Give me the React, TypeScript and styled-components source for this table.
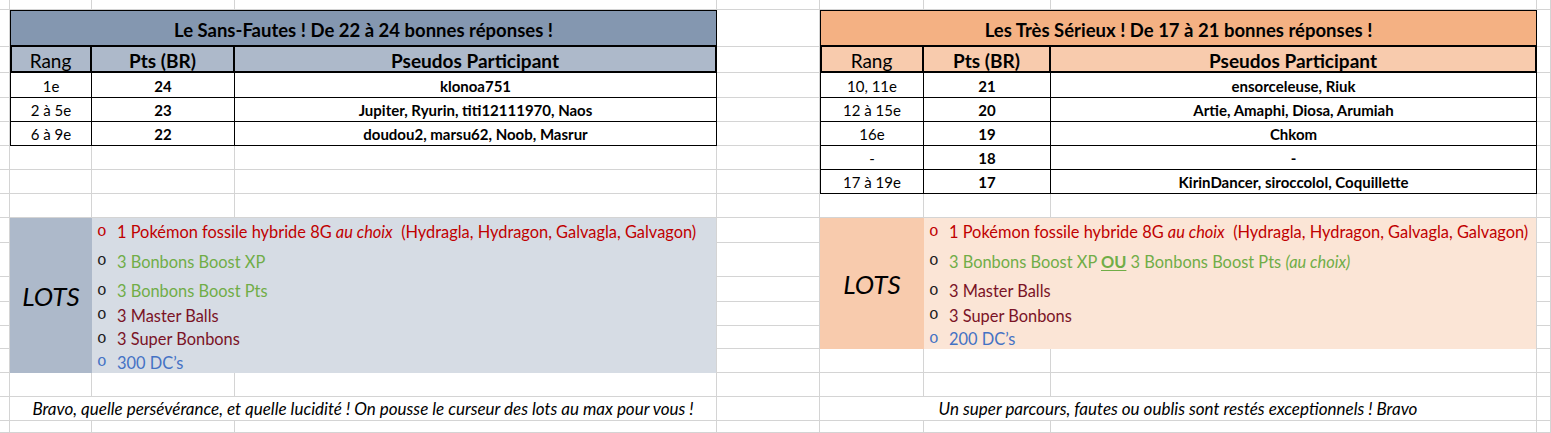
import React from 'react';
import styled, { createGlobalStyle } from 'styled-components';

const GlobalStyle = createGlobalStyle`
    *, *::before, *::after {
        box-sizing: border-box;
    }
    html, body {
        margin: 0;
        padding: 0;
        overflow: hidden;
        background: #ffffff;
    }
    body {
        font-family: Lato, 'Liberation Sans', sans-serif;
        color: #000000;
    }
`;

const GRID_LINE = '#d4d4d4';

// spreadsheet tracks, in px (column widths / row heights as seen on screen)
const COLS = [10, 82, 143, 482, 103, 104, 127, 486, 14];
const ROWS = [10, 37, 26, 25, 24, 24, 24, 24, 24, 25, 34, 25, 24, 23, 24, 24, 24, 12];

// 9 x 18 cells minus the 75 covered by the two tables, lots and notes
const BLANK_CELLS = COLS.length * ROWS.length - 75;

const Sheet = styled.div`
    display: grid;
    grid-template-columns: ${COLS.map((c) => `${c}px`).join(' ')};
    grid-template-rows: ${ROWS.map((r) => `${r}px`).join(' ')};
    grid-auto-flow: row;
    width: 1551px;
    height: 433px;
    overflow: hidden;
`;

const Blank = styled.div`
    border-right: 1px solid ${GRID_LINE};
    border-bottom: 1px solid ${GRID_LINE};
`;

const Table = styled.div<{ $area: string; $cols: number[]; $rows: number[] }>`
    grid-area: ${(p) => p.$area};
    display: grid;
    grid-template-columns: ${(p) => p.$cols.map((c) => `${c}px`).join(' ')};
    grid-template-rows: ${(p) => p.$rows.map((r) => `${r}px`).join(' ')};
    border-left: 1px solid #000;
    border-top: 1px solid #000;
    background: #ffffff;
`;

const TitleCell = styled.div<{ $bg: string }>`
    grid-column: 1 / -1;
    display: flex;
    align-items: center;
    justify-content: center;
    padding-top: 3px;
    background: ${(p) => p.$bg};
    border-right: 1px solid #000;
    border-bottom: 2px solid #000;
    font-size: 18.5px;
    font-weight: 700;
`;

const HeadCell = styled.div<{ $bg: string; $first?: boolean; $bold?: boolean }>`
    display: flex;
    align-items: center;
    justify-content: center;
    padding-top: 3px;
    background: ${(p) => p.$bg};
    border-right: 2px solid #000;
    border-bottom: 2px solid #000;
    box-shadow: ${(p) => (p.$first ? 'inset 1px 0 0 #000' : 'none')};
    font-size: 19px;
    font-weight: ${(p) => (p.$bold ? 700 : 400)};
`;

const DataCell = styled.div<{ $bold?: boolean }>`
    display: flex;
    align-items: center;
    justify-content: center;
    padding-top: 1px;
    border-right: 1px solid #000;
    border-bottom: 1px solid #000;
    font-size: 15px;
    font-weight: ${(p) => (p.$bold ? 700 : 400)};
    white-space: nowrap;
`;

const Lots = styled.div<{ $area: string; $label: number }>`
    grid-area: ${(p) => p.$area};
    display: grid;
    grid-template-columns: ${(p) => p.$label}px 1fr;
    border-right: 1px solid ${GRID_LINE};
    overflow: hidden;
`;

const LotsLabel = styled.div<{ $bg: string }>`
    display: flex;
    align-items: center;
    justify-content: center;
    background: ${(p) => p.$bg};
    font-size: 26px;
    font-style: italic;
`;

const LotsList = styled.ul<{ $bg: string }>`
    list-style: none;
    margin: 0;
    padding: 0 0 0 5px;
    background: ${(p) => p.$bg};
    display: flex;
    flex-direction: column;
`;

const LotsItem = styled.li<{ $h: number; $color: string }>`
    height: ${(p) => p.$h}px;
    flex: none;
    display: flex;
    align-items: center;
    padding-top: 2px;
    color: ${(p) => p.$color};
    font-size: 16.4px;
    white-space: pre;
`;

const Bullet = styled.span<{ $color: string }>`
    width: 20px;
    flex: none;
    font-family: 'Liberation Mono', monospace;
    font-size: 16px;
    color: ${(p) => p.$color};
`;

const Em = styled.em`
    font-style: italic;
`;

const Or = styled.strong`
    font-weight: 700;
    text-decoration: underline;
    text-underline-offset: 2px;
`;

const Note = styled.div<{ $area: string }>`
    grid-area: ${(p) => p.$area};
    display: flex;
    align-items: center;
    justify-content: center;
    border-right: 1px solid ${GRID_LINE};
    border-bottom: 1px solid ${GRID_LINE};
    font-size: 17px;
    font-style: italic;
    white-space: nowrap;
`;

const RED = '#c00000';
const GREEN = '#70ad47';
const MAROON = '#7a1326';
const BLUE = '#4472c4';
const INK = '#1a1a1a';

type Row = [string, string, string];

const leftRows: Row[] = [
    ['1e', '24', 'klonoa751'],
    ['2 à 5e', '23', 'Jupiter, Ryurin, titi12111970, Naos'],
    ['6 à 9e', '22', 'doudou2, marsu62, Noob, Masrur'],
];

const rightRows: Row[] = [
    ['10, 11e', '21', 'ensorceleuse, Riuk'],
    ['12 à 15e', '20', 'Artie, Amaphi, Diosa, Arumiah'],
    ['16e', '19', 'Chkom'],
    ['-', '18', '-'],
    ['17 à 19e', '17', 'KirinDancer, siroccolol, Coquillette'],
];

function Results(props: {
    area: string;
    cols: number[];
    title: string;
    titleBg: string;
    headBg: string;
    rows: Row[];
}): React.ReactElement {
    const { area, cols, title, titleBg, headBg, rows } = props;
    const heights = [36, 26, 25, ...rows.slice(1).map(() => 24)];
    return (
        <Table $area={area} $cols={cols} $rows={heights}>
            <TitleCell $bg={titleBg}>{title}</TitleCell>
            <HeadCell $bg={headBg} $first>
                Rang
            </HeadCell>
            <HeadCell $bg={headBg} $bold>
                Pts (BR)
            </HeadCell>
            <HeadCell $bg={headBg} $bold>
                Pseudos Participant
            </HeadCell>
            {rows.map(([rank, pts, names]) => (
                <React.Fragment key={rank + pts}>
                    <DataCell>{rank}</DataCell>
                    <DataCell $bold>{pts}</DataCell>
                    <DataCell $bold>{names}</DataCell>
                </React.Fragment>
            ))}
        </Table>
    );
}

function Fossil(): React.ReactElement {
    return (
        <LotsItem $h={25} $color={RED}>
            <Bullet $color={RED}>o</Bullet>
            1 Pokémon fossile hybride 8G <Em>au choix</Em>
            {'  (Hydragla, Hydragon, Galvagla, Galvagon)'}
        </LotsItem>
    );
}

function App(): React.ReactElement {
    return (
        <>
            <GlobalStyle />
            <Sheet>
                <Results
                    area="2 / 2 / 7 / 5"
                    cols={[81, 143, 482]}
                    title="Le Sans-Fautes ! De 22 à 24 bonnes réponses !"
                    titleBg="#8497b0"
                    headBg="#adb9ca"
                    rows={leftRows}
                />
                <Results
                    area="2 / 6 / 9 / 9"
                    cols={[103, 127, 486]}
                    title="Les Très Sérieux ! De 17 à 21 bonnes réponses !"
                    titleBg="#f4b183"
                    headBg="#f8cbad"
                    rows={rightRows}
                />

                <Lots $area="10 / 2 / 16 / 5" $label={82}>
                    <LotsLabel $bg="#adb9ca">LOTS</LotsLabel>
                    <LotsList $bg="#d6dce4">
                        <Fossil />
                        <LotsItem $h={34} $color={GREEN}>
                            <Bullet $color={INK}>o</Bullet>3 Bonbons Boost XP
                        </LotsItem>
                        <LotsItem $h={25} $color={GREEN}>
                            <Bullet $color={INK}>o</Bullet>3 Bonbons Boost Pts
                        </LotsItem>
                        <LotsItem $h={24} $color={MAROON}>
                            <Bullet $color={INK}>o</Bullet>3 Master Balls
                        </LotsItem>
                        <LotsItem $h={23} $color={MAROON}>
                            <Bullet $color={INK}>o</Bullet>3 Super Bonbons
                        </LotsItem>
                        <LotsItem $h={24} $color={BLUE}>
                            <Bullet $color={BLUE}>o</Bullet>300 DC’s
                        </LotsItem>
                    </LotsList>
                </Lots>

                <Lots $area="10 / 6 / 15 / 9" $label={104}>
                    <LotsLabel $bg="#f8cbad">LOTS</LotsLabel>
                    <LotsList $bg="#fbe5d6">
                        <Fossil />
                        <LotsItem $h={34} $color={GREEN}>
                            <Bullet $color={INK}>o</Bullet>3 Bonbons Boost XP <Or>OU</Or> 3 Bonbons Boost Pts{' '}
                            <Em>(au choix)</Em>
                        </LotsItem>
                        <LotsItem $h={25} $color={MAROON}>
                            <Bullet $color={INK}>o</Bullet>3 Master Balls
                        </LotsItem>
                        <LotsItem $h={24} $color={MAROON}>
                            <Bullet $color={INK}>o</Bullet>3 Super Bonbons
                        </LotsItem>
                        <LotsItem $h={23} $color={BLUE}>
                            <Bullet $color={BLUE}>o</Bullet>200 DC’s
                        </LotsItem>
                    </LotsList>
                </Lots>

                <Note $area="17 / 2 / 18 / 5">
                    Bravo, quelle persévérance, et quelle lucidité ! On pousse le curseur des lots au max pour vous !
                </Note>
                <Note $area="17 / 6 / 18 / 9">
                    Un super parcours, fautes ou oublis sont restés exceptionnels ! Bravo
                </Note>

                {Array.from({ length: BLANK_CELLS }, (_, i) => (
                    <Blank key={i} />
                ))}
            </Sheet>
        </>
    );
}

export default App;
